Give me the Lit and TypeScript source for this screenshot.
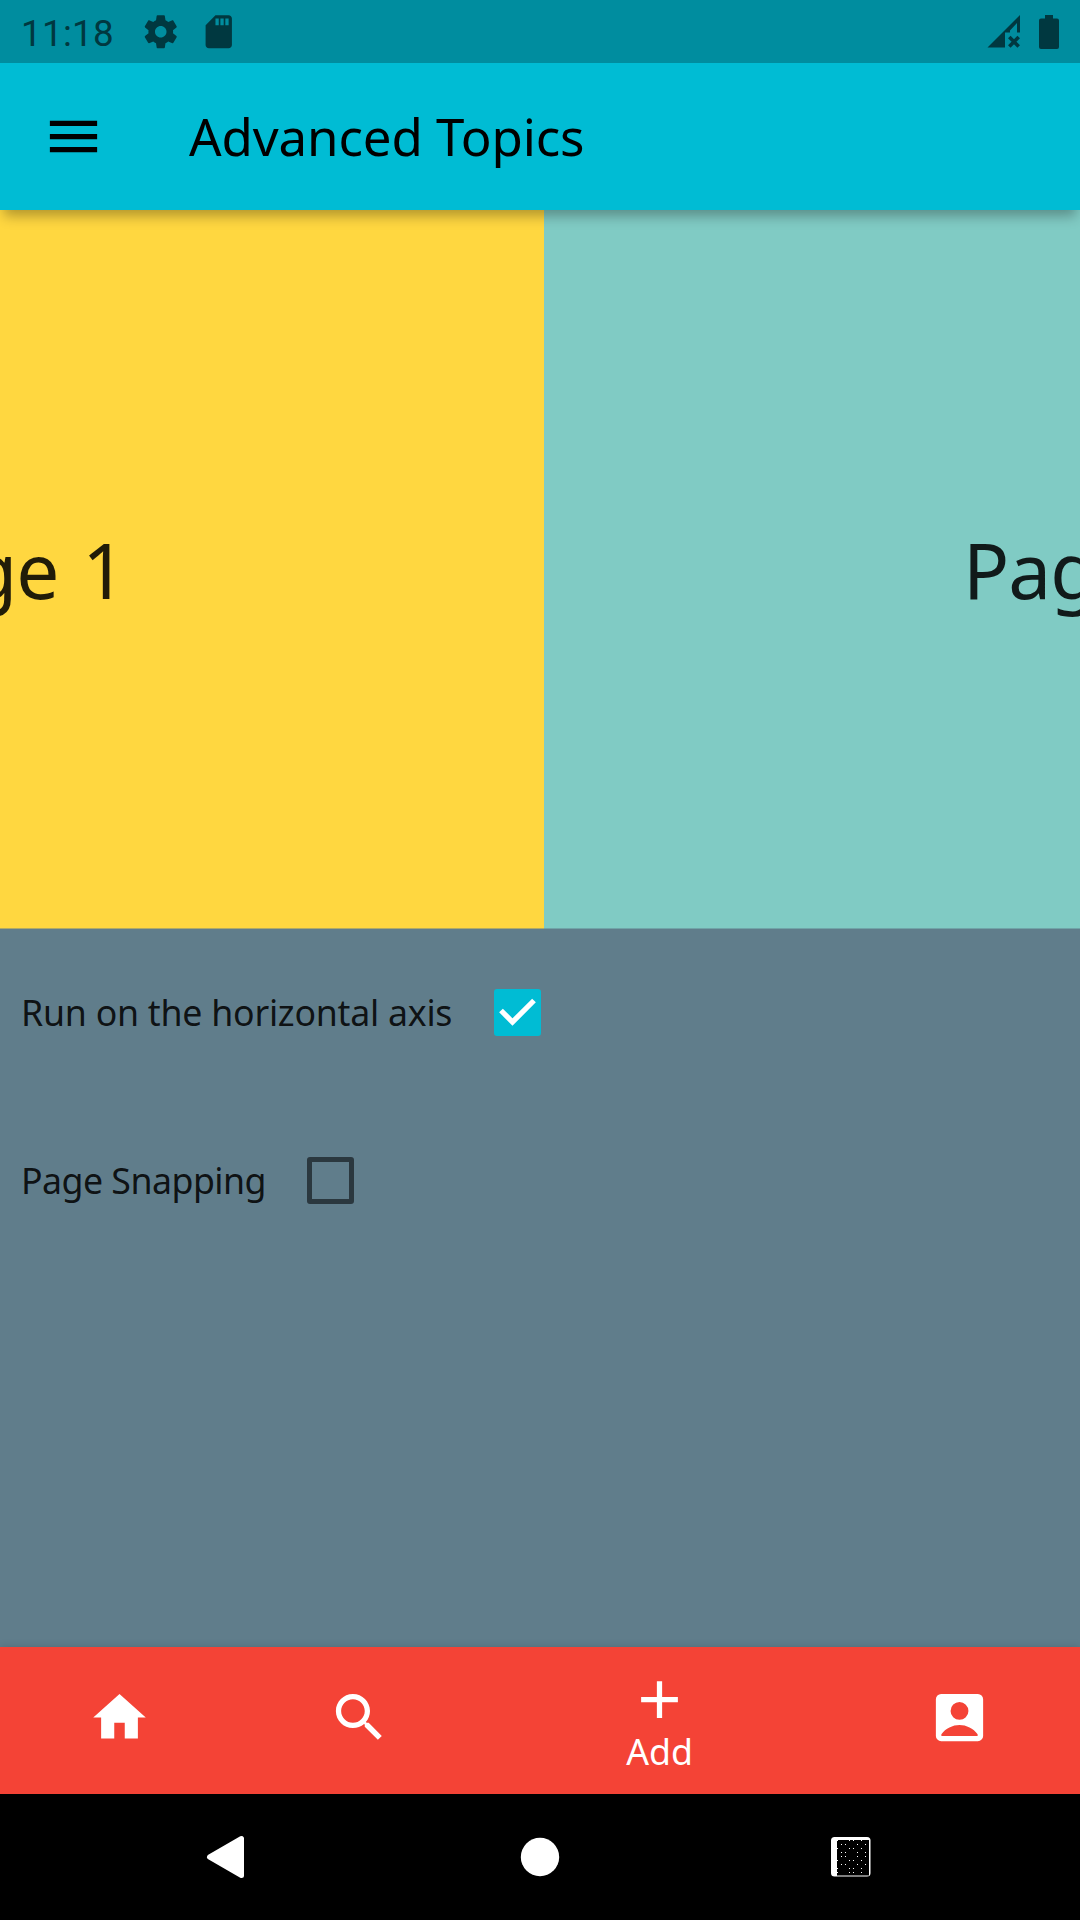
import { LitElement, html, css, svg } from "lit";
import { customElement, property } from "lit/decorators.js";
import { classMap } from "lit/directives/class-map.js";

const ICONS: Record<string, string> = {
  menu: "M3 18h18v-2H3v2zm0-5h18v-2H3v2zm0-7v2h18V6H3z",
  home: "M10 20v-6h4v6h5v-8h3L12 3 2 12h3v8z",
  search:
    "M15.5 14h-.79l-.28-.27C15.41 12.59 16 11.11 16 9.5 16 5.91 13.09 3 9.5 3S3 5.91 3 9.5 5.91 16 9.5 16c1.61 0 3.09-.59 4.23-1.57l.27.28v.79l5 4.99L20.49 19l-4.99-5zm-6 0C7.01 14 5 11.99 5 9.5S7.01 5 9.5 5 14 7.01 14 9.5 11.99 14 9.5 14z",
  add: "M19 13h-6v6h-2v-6H5v-2h6V5h2v6h6v2z",
  account:
    "M5 3h14a2 2 0 0 1 2 2v14a2 2 0 0 1-2 2H5a2 2 0 0 1-2-2V5a2 2 0 0 1 2-2zM12 6.1a3.4 3.4 0 1 0 0 6.8a3.4 3.4 0 1 0 0-6.8zM5.1 19h13.8v-.6C17.3 16.2 14.6 14.9 12 14.9s-5.3 1.3-6.9 3.5z",
  settings:
    "M19.43 12.98c.04-.32.07-.64.07-.98s-.03-.66-.07-.98l2.11-1.65c.19-.15.24-.42.12-.64l-2-3.46c-.12-.22-.39-.3-.61-.22l-2.49 1c-.52-.4-1.08-.73-1.69-.98l-.38-2.65C14.46 2.18 14.25 2 14 2h-4c-.25 0-.46.18-.49.42l-.38 2.65c-.61.25-1.17.59-1.69.98l-2.49-1c-.23-.09-.49 0-.61.22l-2 3.46c-.13.22-.07.49.12.64l2.11 1.65c-.04.32-.07.65-.07.98s.03.66.07.98l-2.11 1.65c-.19.15-.24.42-.12.64l2 3.46c.12.22.39.3.61.22l2.49-1c.52.4 1.08.73 1.69.98l.38 2.65c.03.24.24.42.49.42h4c.25 0 .46-.18.49-.42l.38-2.65c.61-.25 1.17-.59 1.69-.98l2.49 1c.23.09.49 0 .61-.22l2-3.46c.12-.22.07-.49-.12-.64l-2.11-1.65zM12 15.5c-1.93 0-3.5-1.57-3.5-3.5s1.57-3.5 3.5-3.5 3.5 1.57 3.5 3.5-1.57 3.5-3.5 3.5z",
  sdCard:
    "M18 2h-8L4.02 8 4 20c0 1.1.9 2 2 2h12c1.1 0 2-.9 2-2V4c0-1.1-.9-2-2-2zm-6 6h-2V4h2v4zm3 0h-2V4h2v4zm3 0h-2V4h2v4z",
};

@customElement("ui-icon")
export class UiIcon extends LitElement {
  @property() name = "";

  static styles = css`
    :host {
      display: block;
      width: 63px;
      height: 63px;
      flex: none;
    }
    .glyph {
      display: block;
      width: 100%;
      height: 100%;
      fill: currentColor;
      fill-rule: evenodd;
    }
  `;

  render() {
    return html`<svg class="glyph" viewBox="0 0 24 24">
      <path d=${ICONS[this.name] ?? ""}></path>
    </svg>`;
  }
}

@customElement("status-bar")
export class StatusBar extends LitElement {
  static styles = css`
    :host {
      display: flex;
      align-items: center;
      height: 63px;
      box-sizing: border-box;
      padding-left: 21px;
      background: #008d9f;
      color: #003840;
      font-family: Roboto, "Liberation Sans", sans-serif;
    }
    .time {
      width: 120px;
      font-size: 36.75px;
      letter-spacing: 0.3px;
      line-height: 63px;
      padding-top: 2px;
      box-sizing: border-box;
      height: 63px;
    }
    .icon {
      width: 39.5px;
      height: 39.5px;
      margin-right: 18.5px;
    }
    .signal {
      margin-left: auto;
      width: 33px;
      height: 33px;
      margin-right: 19px;
    }
    .battery {
      width: 20px;
      height: 34px;
      margin-right: 21px;
    }
    .shape {
      fill: currentColor;
    }
    .cross {
      stroke: currentColor;
      stroke-width: 3.6;
    }
  `;

  render() {
    return html`
      <div class="time">11:18</div>
      <ui-icon class="icon" name="settings"></ui-icon>
      <ui-icon class="icon" name="sdCard"></ui-icon>
      <svg class="signal" viewBox="0 0 33 33">
        <path class="shape" d="M.5 32.5L33 0V17.5H30V8L23 15.5V17.5H18V32.5Z"></path>
        <path class="cross" d="M22.3 22L31.7 31.4M31.7 22L22.3 31.4"></path>
      </svg>
      <svg class="battery" viewBox="0 0 20 34">
        <path
          class="shape"
          d="M6 0H14V3.5H18A2 2 0 0 1 20 5.500V32A2 2 0 0 1 18 34H2A2 2 0 0 1 0 32V5.500A2 2 0 0 1 2 3.500H6Z"
        ></path>
      </svg>
    `;
  }
}

@customElement("check-row")
export class CheckRow extends LitElement {
  @property() label = "";
  @property({ type: Boolean }) checked = false;

  static styles = css`
    :host {
      display: flex;
      align-items: center;
      height: 126px;
      padding-left: 21px;
      margin-bottom: 42px;
      color: rgba(0, 0, 0, 0.87);
      font-size: 35.7px;
      line-height: 42px;
      white-space: nowrap;
    }
    .label {
      padding-bottom: 1px;
    }
    .box {
      width: 47px;
      height: 47px;
      box-sizing: border-box;
      margin: 0 39.5px 0 41.5px;
      border: 5px solid #2b383f;
      border-radius: 3px;
    }
    .box.checked {
      border: none;
      background: #00bcd4;
    }
    .mark {
      display: block;
      width: 47px;
      height: 47px;
      fill: none;
      stroke: #fff;
      stroke-width: 5.25;
    }
  `;

  render() {
    return html`
      <div class="label">${this.label}</div>
      <div class=${classMap({ box: true, checked: this.checked })}>
        ${this.checked
          ? html`<svg class="mark" viewBox="0 0 47 47">
              <path d="M7 21.500L18.500 33L40 11.500"></path>
            </svg>`
          : null}
      </div>
    `;
  }
}

const RECENTS_DOTS = [
  [37, 30], [49, 30], [53, 30], [61, 30],
  [41, 34], [45, 34], [57, 34], [65, 34],
  [37, 38], [49, 38], [53, 38], [61, 38],
  [41, 42], [45, 42], [57, 42], [65, 42],
  [41, 46], [45, 46], [57, 46], [65, 46],
  [37, 50], [49, 50], [53, 50], [61, 50],
  [41, 54], [45, 54], [57, 54], [65, 54],
  [37, 58], [49, 58], [53, 58], [61, 58],
  [37, 62], [49, 62], [53, 62], [61, 62],
];

@customElement("system-nav")
export class SystemNav extends LitElement {
  static styles = css`
    :host {
      display: flex;
      justify-content: center;
      align-items: center;
      gap: 247px;
      height: 126px;
      background: #000;
    }
    .button {
      width: 64px;
      height: 64px;
      fill: #fff;
    }
    .hole {
      fill: #000;
    }
    .back {
      stroke: #fff;
      stroke-width: 5;
      stroke-linejoin: round;
    }
  `;

  render() {
    return html`
      <svg class="button" viewBox="-0.5 -0.5 64 64">
        <path class="back" d="M12 31.500L44 13V50Z"></path>
      </svg>
      <svg class="button" viewBox="-0.5 -0.5 64 64">
        <circle cx="31.500" cy="31.500" r="19.200"></circle>
      </svg>
      <svg class="button" viewBox="-0.5 -0.5 64 64">
        <rect x="11.500" y="11.500" width="39.500" height="39.500" rx="3.500"></rect>
        <rect class="hole" x="17.500" y="14.500" width="32" height="35.500"></rect>
        ${RECENTS_DOTS.map(
          ([x, y]) => svg`<rect x=${x - 19.5} y=${y - 15.5} width="1" height="1"></rect>`
        )}
      </svg>
    `;
  }
}

@customElement("app-root")
export class AppRoot extends LitElement {
  static styles = css`
    :host {
      display: flex;
      flex-direction: column;
      width: 1080px;
      height: 1920px;
      overflow: hidden;
      background: #607d8b;
      font-family: "Noto Sans", "Open Sans", sans-serif;
    }
    .app-bar {
      position: relative;
      display: flex;
      align-items: center;
      flex: none;
      height: 147px;
      box-sizing: border-box;
      padding-left: 42px;
      gap: 84px;
      background: #00bcd4;
      color: #000;
      box-shadow: 0 10px 12px -4px rgba(0, 0, 0, 0.3);
    }
    .title {
      font-size: 51px;
      letter-spacing: -0.1px;
      line-height: 64px;
      padding-bottom: 2px;
      white-space: nowrap;
    }
    .pager {
      display: flex;
      justify-content: center;
      flex: none;
      height: 719px;
      overflow: hidden;
    }
    .track {
      display: flex;
      flex: none;
      width: 2160px;
      margin-left: 8px;
    }
    .page {
      display: flex;
      align-items: center;
      justify-content: center;
      width: 1080px;
      box-sizing: border-box;
      padding-bottom: 1px;
      font-size: 76.5px;
      letter-spacing: -1px;
      word-spacing: 5px;
      color: rgba(0, 0, 0, 0.87);
    }
    .amber {
      background: #ffd740;
      border-bottom: 1px solid #b0aa66;
    }
    .teal {
      background: #80cbc4;
      border-bottom: 1px solid #70a4a8;
    }
    .options {
      flex: 1;
      padding-top: 20.5px;
    }
    .run-axis {
      letter-spacing: -0.24px;
    }
    .snapping {
      letter-spacing: -0.52px;
    }
    .bottom-bar {
      display: grid;
      grid-template-columns: 2fr 2fr 3fr 2fr;
      flex: none;
      height: 147px;
      background: #f44336;
      color: #fff;
      box-shadow: 0 0 8px rgba(0, 0, 0, 0.15);
    }
    .tab {
      display: flex;
      flex-direction: column;
      align-items: center;
      justify-content: center;
      padding: 0 1px 6px 0;
    }
    .tab.labelled {
      padding-bottom: 0;
    }
    .caption {
      height: 42px;
      font-size: 35.7px;
      line-height: 40px;
    }
  `;

  render() {
    return html`
      <status-bar></status-bar>
      <header class="app-bar">
        <ui-icon name="menu"></ui-icon>
        <div class="title">Advanced Topics</div>
      </header>
      <section class="pager">
        <div class="track">
          <div class="page amber">Page 1</div>
          <div class="page teal">Page 2</div>
        </div>
      </section>
      <section class="options">
        <check-row class="run-axis" label="Run on the horizontal axis" checked></check-row>
        <check-row class="snapping" label="Page Snapping"></check-row>
      </section>
      <nav class="bottom-bar">
        <div class="tab"><ui-icon name="home"></ui-icon></div>
        <div class="tab"><ui-icon name="search"></ui-icon></div>
        <div class="tab labelled">
          <ui-icon name="add"></ui-icon>
          <div class="caption">Add</div>
        </div>
        <div class="tab"><ui-icon name="account"></ui-icon></div>
      </nav>
      <system-nav></system-nav>
    `;
  }
}
